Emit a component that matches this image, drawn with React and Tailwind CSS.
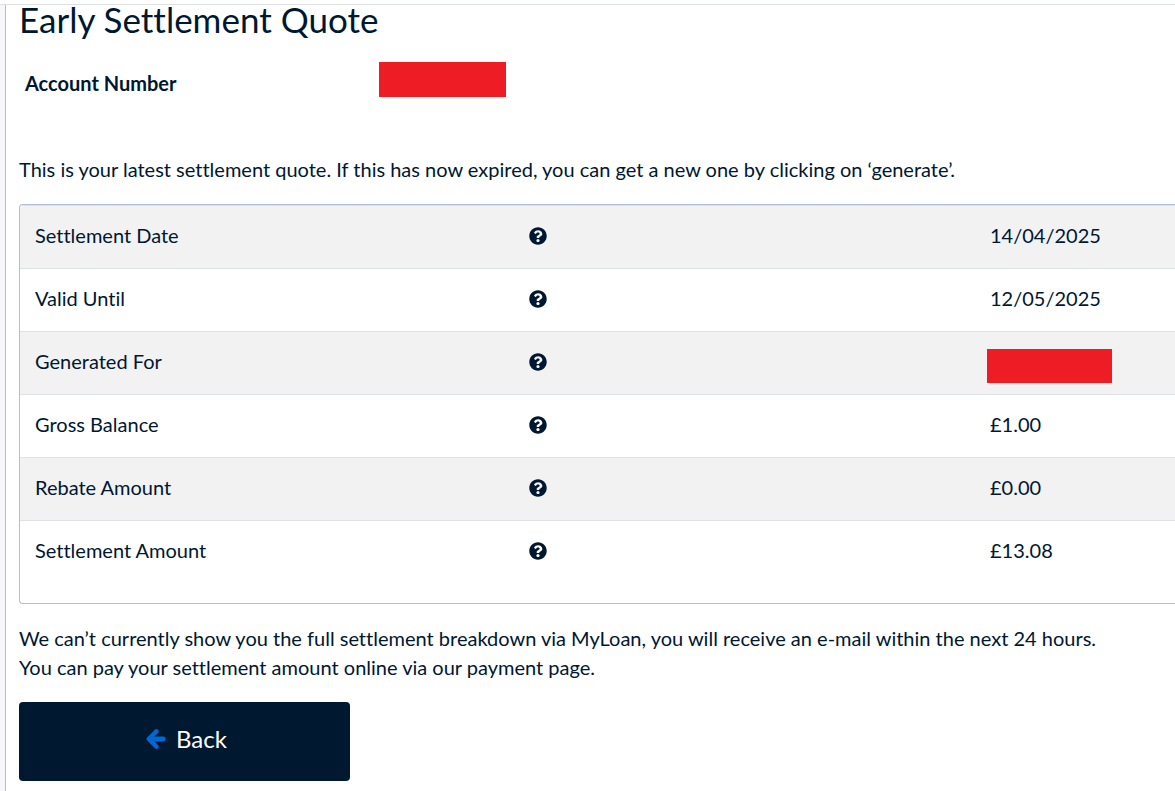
import { FaQuestionCircle } from "react-icons/fa";

const rows = [
  { label: "Settlement Date", value: "14/04/2025" },
  { label: "Valid Until", value: "12/05/2025" },
  { label: "Generated For", value: null },
  { label: "Gross Balance", value: "£1.00" },
  { label: "Rebate Amount", value: "£0.00" },
  { label: "Settlement Amount", value: "£13.08" },
];

function ArrowLeft() {
  return (
    <svg viewBox="0 0 20 20" className="size-5" fill="none" stroke="#0068d4" aria-hidden="true">
      <path d="M10.4 2.4 2.8 10l7.6 7.6" strokeWidth="4.4" strokeLinejoin="round" strokeLinecap="round" />
      <path d="M4 10h13.3" strokeWidth="4.8" strokeLinecap="round" />
    </svg>
  );
}

export default function App() {
  return (
    <div className="flex min-h-screen flex-col bg-white pt-1 font-[Lato,sans-serif] text-xl text-[#001730] [font-variant-ligatures:none]">
      <div className="flex grow border-t border-[#dee2e6] bg-[#f7f7fa] pl-[5px]">
        <main className="min-w-0 grow border-l border-[#b1bdd0] bg-white pb-[10px] pl-[13px]">
          <h1 className="text-[35px] leading-[28px]">Early Settlement Quote</h1>

          <dl className="mt-[29px] flex h-[35px]">
            <dt className="w-[360px] pl-[6px] pt-[7px] font-bold leading-7">Account Number</dt>
            <dd className="h-[35px] w-[127px] bg-[#ee1c25]" />
          </dl>

          <p className="mt-[58px] leading-[29px]">
            This is your latest settlement quote. If this has now expired, you can get a new one by clicking on ‘generate’.
          </p>

          <div className="mt-5 overflow-hidden rounded-l-[4px] border border-r-0 border-[#b1bdd0] pb-[19px]">
            <table className="w-full table-fixed">
              <tbody>
                {rows.map((row) => (
                  <tr key={row.label} className="h-[63px] border-t border-[#dee2e6] odd:bg-[#f2f2f2]">
                    <th scope="row" className="w-[42.7%] px-[15px] pb-1 text-left font-normal">
                      {row.label}
                    </th>
                    <td className="w-[39.9%] px-4 pb-[2px]">
                      <button type="button" aria-label={`About ${row.label}`} className="block">
                        <FaQuestionCircle className="size-[18px]" />
                      </button>
                    </td>
                    <td className="px-4 pb-1">
                      {row.value ?? <div className="-ml-[3px] mt-[10px] h-[34px] w-[125px] bg-[#ee1c25]" />}
                    </td>
                  </tr>
                ))}
              </tbody>
            </table>
          </div>

          <p className="mt-5 leading-[29px]">
            We can’t currently show you the full settlement breakdown via MyLoan, you will receive an e-mail within the next 24 hours.
            <br />
            You can pay your settlement amount online via our payment page.
          </p>

          <button
            type="button"
            className="mt-5 flex h-[79px] w-[331px] items-center justify-center gap-[10px] rounded-[4px] bg-[#001830] pb-1 pl-1 text-2xl text-white"
          >
            <ArrowLeft />
            Back
          </button>
        </main>
      </div>
    </div>
  );
}
